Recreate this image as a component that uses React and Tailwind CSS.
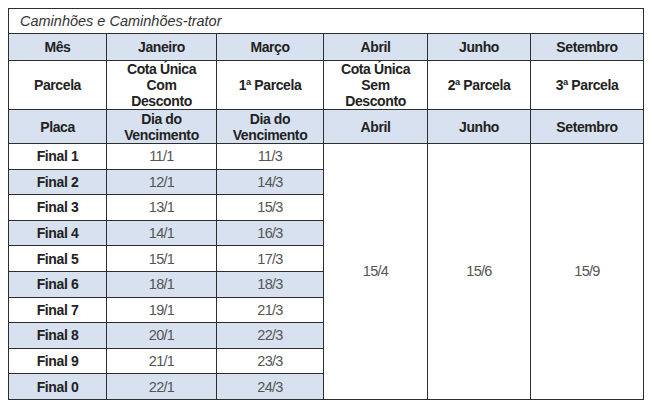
import React from 'react';

const finals = [
  { placa: 'Final 1', jan: '11/1', mar: '11/3' },
  { placa: 'Final 2', jan: '12/1', mar: '14/3' },
  { placa: 'Final 3', jan: '13/1', mar: '15/3' },
  { placa: 'Final 4', jan: '14/1', mar: '16/3' },
  { placa: 'Final 5', jan: '15/1', mar: '17/3' },
  { placa: 'Final 6', jan: '18/1', mar: '18/3' },
  { placa: 'Final 7', jan: '19/1', mar: '21/3' },
  { placa: 'Final 8', jan: '20/1', mar: '22/3' },
  { placa: 'Final 9', jan: '21/1', mar: '23/3' },
  { placa: 'Final 0', jan: '22/1', mar: '24/3' },
];

const cell = 'border-[1.5px] border-[#2e2e2e] p-0 text-center align-middle';
const head = `${cell} font-bold text-[#222] tracking-[-0.4px]`;
const data = `${cell} text-[#555] text-[14.5px] tracking-[-0.7px]`;

const App = () => {
  return (
    <div className="w-[652px] h-[408px] bg-white pt-[8px] pl-[8px] font-['Liberation_Sans',Arial,sans-serif] text-[14px] leading-[16px]">
      <table className="table-fixed border-collapse w-[635px]">
        <colgroup>
          <col className="w-[98px]" />
          <col className="w-[110px]" />
          <col className="w-[107px]" />
          <col className="w-[104px]" />
          <col className="w-[103px]" />
          <col className="w-[113px]" />
        </colgroup>
        <tbody>
          <tr className="h-[25px]">
            <td colSpan={6} className="border-[1.5px] border-[#2e2e2e] pl-[11px] italic text-[#333] text-left text-[14.5px]">
              Caminhões e Caminhões-trator
            </td>
          </tr>
          <tr className="h-[27px] bg-[#d7e1ef]">
            <td className={head}>Mês</td>
            <td className={head}>Janeiro</td>
            <td className={head}>Março</td>
            <td className={head}>Abril</td>
            <td className={head}>Junho</td>
            <td className={head}>Setembro</td>
          </tr>
          <tr className="h-[49px] bg-white">
            <td className={head}>Parcela</td>
            <td className={head}>Cota Única<br />Com<br />Desconto</td>
            <td className={head}>1ª Parcela</td>
            <td className={head}>Cota Única<br />Sem<br />Desconto</td>
            <td className={head}>2ª Parcela</td>
            <td className={head}>3ª Parcela</td>
          </tr>
          <tr className="h-[34px] bg-[#d7e1ef]">
            <td className={head}>Placa</td>
            <td className={head}>Dia do<br />Vencimento</td>
            <td className={head}>Dia do<br />Vencimento</td>
            <td className={head}>Abril</td>
            <td className={head}>Junho</td>
            <td className={head}>Setembro</td>
          </tr>
          {finals.map((row, i) => (
            <tr key={row.placa} className={`h-[25.6px] ${i % 2 === 1 ? 'bg-[#d7e1ef]' : 'bg-white'}`}>
              <td className={head}>{row.placa}</td>
              <td className={data}>{row.jan}</td>
              <td className={data}>{row.mar}</td>
              {i === 0 && (
                <>
                  <td rowSpan={10} className={`${data} bg-white`}>15/4</td>
                  <td rowSpan={10} className={`${data} bg-white`}>15/6</td>
                  <td rowSpan={10} className={`${data} bg-white`}>15/9</td>
                </>
              )}
            </tr>
          ))}
        </tbody>
      </table>
    </div>
  );
};

export default App;
